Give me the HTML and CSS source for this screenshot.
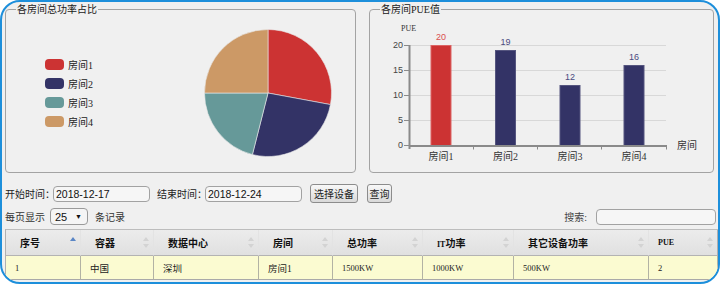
FILE: index.html
```html
<!DOCTYPE html>
<html lang="zh-CN">
<head>
<meta charset="utf-8">
<title>房间功率统计</title>
<link rel="stylesheet" href="styles.css">
</head>
<body>
<div class="frame">
  <div class="charts">
    <fieldset class="panel panel-pie">
      <legend>各房间总功率占比</legend>
      <div class="pie-body">
        <ul class="legend-list">
          <li><span class="sw sw1"></span>房间1</li>
          <li><span class="sw sw2"></span>房间2</li>
          <li><span class="sw sw3"></span>房间3</li>
          <li><span class="sw sw4"></span>房间4</li>
        </ul>
        <svg class="pie" width="128" height="128" viewBox="0 0 128 128">
          <g stroke="#e9e9e9" stroke-width="0.6">
            <path d="M64 64 L64 0.5 A63.5 63.5 0 0 1 126.44 75.57 Z" fill="#cc3333"/>
            <path d="M64 64 L126.44 75.57 A63.5 63.5 0 0 1 48.42 125.56 Z" fill="#333366"/>
            <path d="M64 64 L48.42 125.56 A63.5 63.5 0 0 1 0.5 64 Z" fill="#669999"/>
            <path d="M64 64 L0.5 64 A63.5 63.5 0 0 1 64 0.5 Z" fill="#cc9966"/>
          </g>
        </svg>
      </div>
    </fieldset>
    <fieldset class="panel panel-bar">
      <legend>各房间PUE值</legend>
      <svg class="bar" width="343" height="155" viewBox="370 17 343 155">
        <g stroke="#d8d8d8" stroke-width="1">
          <line x1="410" x2="666" y1="45.5" y2="45.5"/>
          <line x1="410" x2="666" y1="70.5" y2="70.5"/>
          <line x1="410" x2="666" y1="95.5" y2="95.5"/>
          <line x1="410" x2="666" y1="120.5" y2="120.5"/>
        </g>
        <text x="401" y="31" class="t-pue">PUE</text>
        <g class="t-y" text-anchor="end">
          <text x="403" y="48">20</text>
          <text x="403" y="73">15</text>
          <text x="403" y="98">10</text>
          <text x="403" y="123">5</text>
          <text x="403" y="148">0</text>
        </g>
        <rect x="431" y="45.5" width="20" height="100" fill="#cc3333" stroke="#dc6464"/>
        <rect x="495.5" y="50.5" width="20" height="95" fill="#333366" stroke="#55557f"/>
        <rect x="560" y="85.5" width="20" height="60" fill="#333366" stroke="#55557f"/>
        <rect x="624" y="65.5" width="20" height="80" fill="#333366" stroke="#55557f"/>
        <g stroke="#8a8a8a">
          <line x1="409.5" y1="45" x2="409.5" y2="149" stroke-width="2"/>
          <line x1="409" y1="146" x2="667" y2="146" stroke-width="2"/>
          <line x1="404" x2="409" y1="45.5" y2="45.5"/>
          <line x1="404" x2="409" y1="70.5" y2="70.5"/>
          <line x1="404" x2="409" y1="95.5" y2="95.5"/>
          <line x1="404" x2="409" y1="120.5" y2="120.5"/>
          <line x1="404" x2="409" y1="145.5" y2="145.5"/>
          <line x1="473.5" x2="473.5" y1="146" y2="149.5"/>
          <line x1="537.5" x2="537.5" y1="146" y2="149.5"/>
          <line x1="601.5" x2="601.5" y1="146" y2="149.5"/>
          <line x1="666.5" x2="666.5" y1="146" y2="149.5"/>
        </g>
        <g class="t-val" text-anchor="middle">
          <text x="441" y="40" class="v-red">20</text>
          <text x="505.5" y="45">19</text>
          <text x="570" y="80">12</text>
          <text x="634" y="60">16</text>
        </g>
        <g class="t-x" text-anchor="middle">
          <text x="441" y="159.5">房间1</text>
          <text x="505.5" y="159.5">房间2</text>
          <text x="570" y="159.5">房间3</text>
          <text x="634" y="159.5">房间4</text>
        </g>
        <text x="677" y="148.5" class="t-axis">房间</text>
      </svg>
    </fieldset>
  </div>

  <div class="toolbar">
    <span class="lbl">开始时间：</span>
    <input class="txt" type="text" value="2018-12-17">
    <span class="lbl lbl-end">结束时间：</span>
    <input class="txt" type="text" value="2018-12-24">
    <button class="btn btn-sel" type="button">选择设备</button>
    <button class="btn btn-q" type="button">查询</button>
  </div>

  <div class="pager">
    <span class="pg-lbl">每页显示</span>
    <div class="select"><span>25</span><span class="caret">▼</span></div>
    <span class="pg-tail">条记录</span>
    <span class="search-lbl">搜索:</span>
    <input class="txt search" type="text" value="">
  </div>

  <table class="grid">
    <thead>
      <tr>
        <th class="c1"><div class="th-in"><span>序号</span><svg class="sort" width="6" height="11" viewBox="0 0 6 11"><path d="M0 4 L3 0 L6 4 Z" fill="#5a86c6"/></svg></div></th>
        <th class="c2"><div class="th-in"><span>容器</span><svg class="sort" width="6" height="11" viewBox="0 0 6 11"><path d="M0 4 L3 0 L6 4 Z M0 7 L3 11 L6 7 Z" fill="#d3d3d3"/></svg></div></th>
        <th class="c3"><div class="th-in"><span>数据中心</span><svg class="sort" width="6" height="11" viewBox="0 0 6 11"><path d="M0 4 L3 0 L6 4 Z M0 7 L3 11 L6 7 Z" fill="#d3d3d3"/></svg></div></th>
        <th class="c4"><div class="th-in"><span>房间</span><svg class="sort" width="6" height="11" viewBox="0 0 6 11"><path d="M0 4 L3 0 L6 4 Z M0 7 L3 11 L6 7 Z" fill="#d3d3d3"/></svg></div></th>
        <th class="c5"><div class="th-in"><span>总功率</span><svg class="sort" width="6" height="11" viewBox="0 0 6 11"><path d="M0 4 L3 0 L6 4 Z M0 7 L3 11 L6 7 Z" fill="#d3d3d3"/></svg></div></th>
        <th class="c6"><div class="th-in"><span><span class="a">IT</span>功率</span><svg class="sort" width="6" height="11" viewBox="0 0 6 11"><path d="M0 4 L3 0 L6 4 Z M0 7 L3 11 L6 7 Z" fill="#d3d3d3"/></svg></div></th>
        <th class="c7"><div class="th-in"><span>其它设备功率</span><svg class="sort" width="6" height="11" viewBox="0 0 6 11"><path d="M0 4 L3 0 L6 4 Z M0 7 L3 11 L6 7 Z" fill="#d3d3d3"/></svg></div></th>
        <th class="c8"><div class="th-in th-last"><span class="a">PUE</span><svg class="sort" width="6" height="11" viewBox="0 0 6 11"><path d="M0 4 L3 0 L6 4 Z M0 7 L3 11 L6 7 Z" fill="#d3d3d3"/></svg></div></th>
      </tr>
    </thead>
    <tbody>
      <tr>
        <td class="n">1</td>
        <td>中国</td>
        <td>深圳</td>
        <td>房间1</td>
        <td class="n">1500KW</td>
        <td class="n">1000KW</td>
        <td class="n">500KW</td>
        <td class="n">2</td>
      </tr>
    </tbody>
  </table>
</div>
</body>
</html>
```

FILE: styles.css
```css
* { box-sizing: border-box; }
html, body { margin: 0; padding: 0; background: #ffffff; }
body {
  font-family: "Liberation Serif", "Noto Sans CJK SC", sans-serif;
  font-size: 10px;
  color: #222222;
}

.frame {
  width: 720px;
  height: 284px;
  border: 2px solid #1d8fdb;
  border-radius: 20px;
  background: #f0f0f0;
  overflow: hidden;
  padding-left: 3px;
}

/* chart panels */
.charts { display: flex; }
.panel {
  margin: 0;
  padding: 0;
  min-width: 0;
  height: 171px;
  border: 1px solid #a3a3a3;
  border-radius: 4px;
}
.panel-pie { width: 351px; }
.panel-bar { width: 345px; margin-left: 13px; }
.panel legend {
  margin-left: 10px;
  padding: 0 1px;
  font-size: 10px;
  line-height: 15px;
  color: #1a1a1a;
}

.pie-body { display: flex; align-items: flex-start; }
.legend-list {
  list-style: none;
  margin: 38px 0 0 39px;
  padding: 0;
  width: 159px;
}
.legend-list li {
  display: flex;
  align-items: center;
  height: 19px;
  font-size: 10px;
  color: #222;
}
.sw { width: 19px; height: 11px; border-radius: 4px; margin-right: 4px; }
.sw1 { background: #cc3333; }
.sw2 { background: #333366; }
.sw3 { background: #669999; }
.sw4 { background: #cc9966; }
.pie { display: block; margin-top: 12px; }

.bar { display: block; }
.bar text { font-family: "Liberation Sans", "Noto Sans CJK SC", sans-serif; }
.bar .t-pue { font-family: "Liberation Serif", serif; font-size: 8px; fill: #333; }
.t-y text { font-size: 9px; fill: #444; }
.t-val text { font-size: 9px; fill: #4a4a80; }
.t-val .v-red { fill: #d94f4f; }
.bar .t-x text, .bar .t-axis { font-family: "Liberation Serif", "Noto Sans CJK SC", serif; font-size: 10px; fill: #333; }

/* toolbar */
.toolbar {
  display: flex;
  align-items: center;
  height: 19px;
  margin-top: 11px;
}
.lbl { width: 48px; white-space: nowrap; color: #222; }
.lbl-end { margin-left: 7px; }
.txt {
  width: 97px;
  height: 16px;
  margin: 0;
  padding: 0 0 0 2px;
  border: 1px solid #a2a2a2;
  border-radius: 4px;
  background: #f6f6f6;
  font: 10.5px "Liberation Sans", sans-serif;
  color: #111;
  outline: none;
}
.btn {
  height: 19px;
  margin: 0;
  padding: 0;
  border: 1px solid #8c8c8c;
  border-radius: 3px;
  background: linear-gradient(#f8f8f8, #d9d9d9);
  font-family: "Noto Sans CJK SC", sans-serif;
  font-size: 10px;
  color: #222;
}
.btn-sel { width: 48px; margin-left: 8px; }
.btn-q { width: 25px; margin-left: 9px; }

/* pager */
.pager {
  display: flex;
  align-items: center;
  height: 19px;
  margin-top: 4px;
  margin-right: 2px;
  color: #333;
}
.pg-lbl { width: 45px; white-space: nowrap; }
.select {
  width: 38px;
  height: 17px;
  border: 1px solid #9a9a9a;
  border-radius: 4px;
  background: #f5f5f5;
  display: flex;
  align-items: center;
  justify-content: space-between;
  padding: 0 5px 0 4px;
  font: 11px "Liberation Sans", sans-serif;
  color: #111;
}
.caret { font-size: 7px; }
.pg-tail { margin-left: 7px; }
.search-lbl { margin-left: auto; color: #444; }
.search { width: 120px; margin-left: 9px; }

/* table */
.grid {
  margin-top: 3px;
  width: 713px;
  table-layout: fixed;
  border-collapse: separate;
  border-spacing: 0;
  border-top: 1px solid #bdbdbd;
  border-left: 1px solid #b0b0b0;
}
.grid th {
  height: 26px;
  padding: 0;
  text-align: left;
  font-size: 10px;
  font-weight: bold;
  color: #111;
  background: linear-gradient(#ececec, #e0e0e0);
  border-right: 1px solid #e3e3e3;
  border-bottom: 1px solid #b3b3b3;
}
.grid th.c8 { border-right-color: #b0b0b0; }
.c1 { width: 75px; }
.c2 { width: 73px; }
.c3 { width: 105px; }
.c4 { width: 74px; }
.c5 { width: 90px; }
.c6 { width: 91px; }
.c7 { width: 135px; }
.c8 { width: 69px; }
.th-in {
  display: flex;
  align-items: center;
  justify-content: space-between;
  padding: 0 4px 0 14px;
}
.th-last { padding-left: 9px; }
.sort { display: block; }
.a { font-size: 8px; }
.grid td {
  height: 24px;
  padding: 0 0 0 9px;
  font-size: 9.5px;
  color: #222;
  background: #fbfbd1;
  border-right: 1px solid #b2b2a4;
  border-bottom: 1px solid #a9a9a9;
  white-space: nowrap;
}
.grid td.n { font-size: 8.5px; }
```
